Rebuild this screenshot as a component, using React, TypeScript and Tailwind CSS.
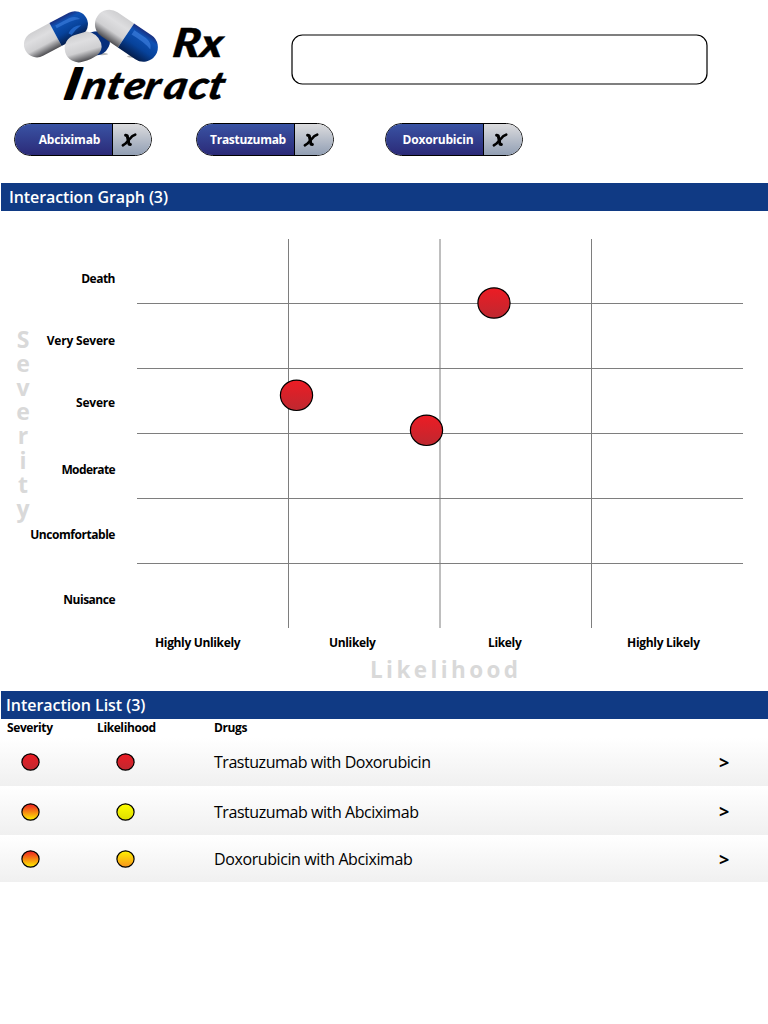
const chips = [
  { name: 'Abciximab', cls: 'mr-[44px]', text: 'pl-[12px] tracking-[-0.15px]' },
  { name: 'Trastuzumab', cls: 'mr-[51px]', text: 'pl-[5px] tracking-[-0.3px]' },
  { name: 'Doxorubicin', cls: '', text: 'pl-[7px] tracking-[-0.2px]' },
];

const severities = [
  { label: 'Death', cls: 'h-[62px] tracking-[-0.5px]' },
  { label: 'Very Severe', cls: 'h-[62px] tracking-[-0.2px]' },
  { label: 'Severe', cls: 'h-[67px] tracking-[-0.2px]' },
  { label: 'Moderate', cls: 'h-[65px] tracking-[-0.6px]' },
  { label: 'Uncomfortable', cls: 'h-[65px] tracking-[-0.45px]' },
  { label: 'Nuisance', cls: 'h-[40px] tracking-[-0.5px]' },
];

const points = [
  { x: 494, y: 303 },
  { x: 296.5, y: 395.3 },
  { x: 426.5, y: 430.3 },
];

const rows = [
  { drugs: 'Trastuzumab with Doxorubicin', cls: 'h-[48px]', pad: '', sev: 'red', like: 'red', text: 'tracking-[-0.46px]' },
  { drugs: 'Trastuzumab with Abciximab', cls: 'h-[49px]', pad: 'pt-[2px]', sev: 'orange', like: 'yellow', text: 'tracking-[-0.44px]' },
  { drugs: 'Doxorubicin with Abciximab', cls: 'h-[47px]', pad: 'pt-px', sev: 'orange', like: 'amber', text: 'tracking-[-0.4px]' },
];

function Logo() {
  return (
    <svg width="240" height="115" viewBox="0 0 240 115" className="block">
      <defs>
        <linearGradient id="white" x1="0" y1="0" x2="0" y2="1">
          <stop offset="0" stopColor="#cfcfd1" />
          <stop offset="0.3" stopColor="#dedee0" />
          <stop offset="0.65" stopColor="#cfcfd1" />
          <stop offset="1" stopColor="#4c4c50" />
        </linearGradient>
        <linearGradient id="blue" x1="0" y1="0" x2="0" y2="1">
          <stop offset="0" stopColor="#1a2f80" />
          <stop offset="0.2" stopColor="#0f52b4" />
          <stop offset="0.6" stopColor="#07429a" />
          <stop offset="1" stopColor="#041d4c" />
        </linearGradient>
      </defs>
      <ellipse cx="102" cy="54" rx="6" ry="1.2" fill="#b5b5b5" />
      <ellipse cx="136" cy="56.5" rx="9" ry="1.3" fill="#b5b5b5" />
      <g transform="translate(55.5 34.5) rotate(-28)">
        <path d="M0-13H-21A13 13 0 0 0-21 13H0Z" fill="url(#white)" />
        <path d="M0-13H22A13 13 0 0 1 22 13H0Z" fill="url(#blue)" />
        <path d="M4-8H20Q27-7 29-2Q22-5 4-5Z" fill="#3f80df" opacity=".6" />
        <path d="M12 5Q20 0 27 4Q20 5 14 8Z" fill="#2b75dd" opacity=".7" />
      </g>
      <path d="M90 32.5Q104 29 109 36Q112 44 106 51Q102 55 96 55.5Q104 44 90 32.5Z" fill="#062f7c" />
      <g transform="translate(83.5 47) rotate(-16)">
        <path d="M-5-14H7Q17-10 18 1Q18 9 10 12Q5 14-5 14A14 14 0 0 1-5-14Z" fill="url(#white)" />
      </g>
      <g transform="translate(126 35.5) rotate(34)">
        <path d="M0-14.5H-20A14.5 14.5 0 0 0-20 14.5H0Z" fill="url(#white)" />
        <path d="M0-14.5H21A14.5 14.5 0 0 1 21 14.5H0Z" fill="url(#blue)" />
        <path d="M4-9H18Q26-8 28-2Q20-5 4-4Z" fill="#3f80df" opacity=".65" />
      </g>
      <g className="font-['Lato',sans-serif] font-black italic" fill="#000" stroke="#000" strokeLinejoin="round">
        <text transform="translate(171.500 57) skewX(-8)" fontSize="40" textLength="50" lengthAdjust="spacingAndGlyphs" strokeWidth=".4">Rx</text>
        <text transform="translate(63 98.500) skewX(-12) scale(1.120 1)" fontSize="39">
          <tspan x="0" fontSize="43" strokeWidth="1.8">I</tspan>
          <tspan x="15.500 37 52.500 71 88.500 110.500 128" strokeWidth=".3">nteract</tspan>
        </text>
      </g>
    </svg>
  );
}

function Dot({ cx, cy, rx, ry, fill }: { cx: number; cy: number; rx: number; ry: number; fill: string }) {
  return <ellipse cx={cx} cy={cy} rx={rx} ry={ry} fill={`url(#${fill})`} stroke="#000" strokeWidth="1.2" />;
}

function Status({ fill }: { fill: string }) {
  return (
    <svg width="20" height="20" viewBox="0 0 20 20" className="block shrink-0">
      <Dot cx={9.5} cy={10} rx={8.6} ry={8.2} fill={fill} />
    </svg>
  );
}

function Gradients() {
  const list = [
    ['red', '#ed1c24', '#be2830'],
    ['orange', '#ed1c24', '#fff200'],
    ['yellow', '#ffff00', '#dddd00'],
    ['amber', '#fff200', '#f7941e'],
  ];
  return (
    <svg width="0" height="0" className="absolute">
      <defs>
        {list.map(([id, a, b]) => (
          <linearGradient key={id} id={id} x1="0" y1="0" x2="0" y2="1">
            <stop offset="0" stopColor={a} />
            <stop offset="1" stopColor={b} />
          </linearGradient>
        ))}
      </defs>
    </svg>
  );
}

export default function App() {
  return (
    <main className="h-[1024px] w-[768px] overflow-hidden bg-white font-['Open_Sans','Noto_Sans',sans-serif] text-black">
      <Gradients />
      <header className="flex h-[123px] items-start">
        <Logo />
        <div className="relative mt-[34px] ml-[51px] h-[51px] w-[417px]">
          <svg width="417" height="51" viewBox="0 0 417 51" className="pointer-events-none absolute inset-0">
            <rect x="1" y="1" width="415" height="49" rx="10.5" fill="#fff" stroke="#000" strokeWidth="1.2" />
          </svg>
          <input aria-label="Drug search" className="relative h-full w-full bg-transparent px-3 outline-none" />
        </div>
      </header>
      <section className="flex h-[60px] items-start pl-[14px]">
        {chips.map((c) => (
          <div key={c.name} className={`flex h-[33px] w-[138px] shrink-0 overflow-hidden rounded-full border border-black ${c.cls}`}>
            <div className={`flex w-[98px] items-center justify-center border-r border-black bg-linear-to-b from-[#3953a4] to-[#2b2a78] text-[12px] font-bold text-white ${c.text}`}>{c.name}</div>
            <button aria-label="Remove" className="flex flex-1 items-center bg-linear-to-b from-[#dcdcde] to-[#929fb4] pl-[7px]">
              <svg width="18" height="16" viewBox="0 0 18 16" fill="none" stroke="#000" strokeLinecap="round" strokeLinejoin="round">
                <path d="M5.6 3.2L7.2 3.6L9 12.3L10.4 12.4" strokeWidth="3" />
                <path d="M15.3 2.6L12.3 4.2L5.2 11.8L2.8 13.4" strokeWidth="2.5" />
              </svg>
            </button>
          </div>
        ))}
      </section>
      <h2 className="ml-px flex h-[28px] items-center bg-[#103a84] pl-[8px] text-[16px] font-semibold tracking-[-0.1px] text-white">Interaction Graph (3)</h2>
      <section className="relative flex h-[419px]">
        <div className="flex w-[30px] shrink-0 flex-col items-center pt-[115.500px] pl-[16px] text-[23px] leading-[24.2px] font-bold text-[#d9d9d9]">
          {'Severity'.split('').map((l, i) => <span key={i}>{l}</span>)}
        </div>
        <div className="flex w-[85px] shrink-0 flex-col items-end pt-[58px] text-right text-[12px] leading-[19px] font-bold whitespace-nowrap">
          {severities.map((s) => <div key={s.label} className={s.cls}>{s.label}</div>)}
        </div>
        <svg width="653" height="419" viewBox="115 211 653 419" className="block shrink-0">
          <g stroke="#000" strokeWidth="1" opacity=".5">
            {[303.5, 368.5, 433.5, 498.5, 563.5].map((y) => <path key={y} d={`M137 ${y}H743`} />)}
            {[288.5, 591.5].map((x) => <path key={x} d={`M${x} 239V628`} />)}
            <path d="M440 239V628" />
          </g>
          {points.map((p) => <Dot key={p.x} cx={p.x} cy={p.y} rx={16.1} ry={15.2} fill="red" />)}
        </svg>
      </section>
      <div className="flex h-[26px] pt-[4px] pl-[155px] text-[12px] leading-[18px] font-bold tracking-[-0.35px] whitespace-nowrap">
        <span className="w-[174px]">Highly Unlikely</span>
        <span className="w-[159px]">Unlikely</span>
        <span className="w-[139px]">Likely</span>
        <span className="tracking-[-0.3px]">Highly Likely</span>
      </div>
      <div className="h-[35px] pl-[370px] text-[22.5px] leading-[28px] font-bold tracking-[3.4px] text-[#d9d9d9]">Likelihood</div>
      <h2 className="ml-px flex h-[28px] items-center bg-[#103a84] pl-[5px] text-[16px] font-semibold tracking-[-0.05px] text-white">Interaction List (3)</h2>
      <div className="flex h-[19px] pl-[7px] text-[12px] leading-[18px] font-bold tracking-[-0.4px]">
        <span className="w-[90px]">Severity</span>
        <span className="w-[117px]">Likelihood</span>
        <span>Drugs</span>
      </div>
      {rows.map((r) => (
        <div key={r.drugs} className={`flex items-center bg-linear-to-b from-white to-[#f0f0f0] pl-[21px] text-[16px] ${r.cls} ${r.pad}`}>
          <Status fill={r.sev} />
          <div className="ml-[75px]"><Status fill={r.like} /></div>
          <span className={`ml-[78px] w-[505px] leading-[20px] whitespace-nowrap ${r.text}`}>{r.drugs}</span>
          <span className="-mt-px text-[18px] leading-[20px] font-bold">&gt;</span>
        </div>
      ))}
    </main>
  );
}
